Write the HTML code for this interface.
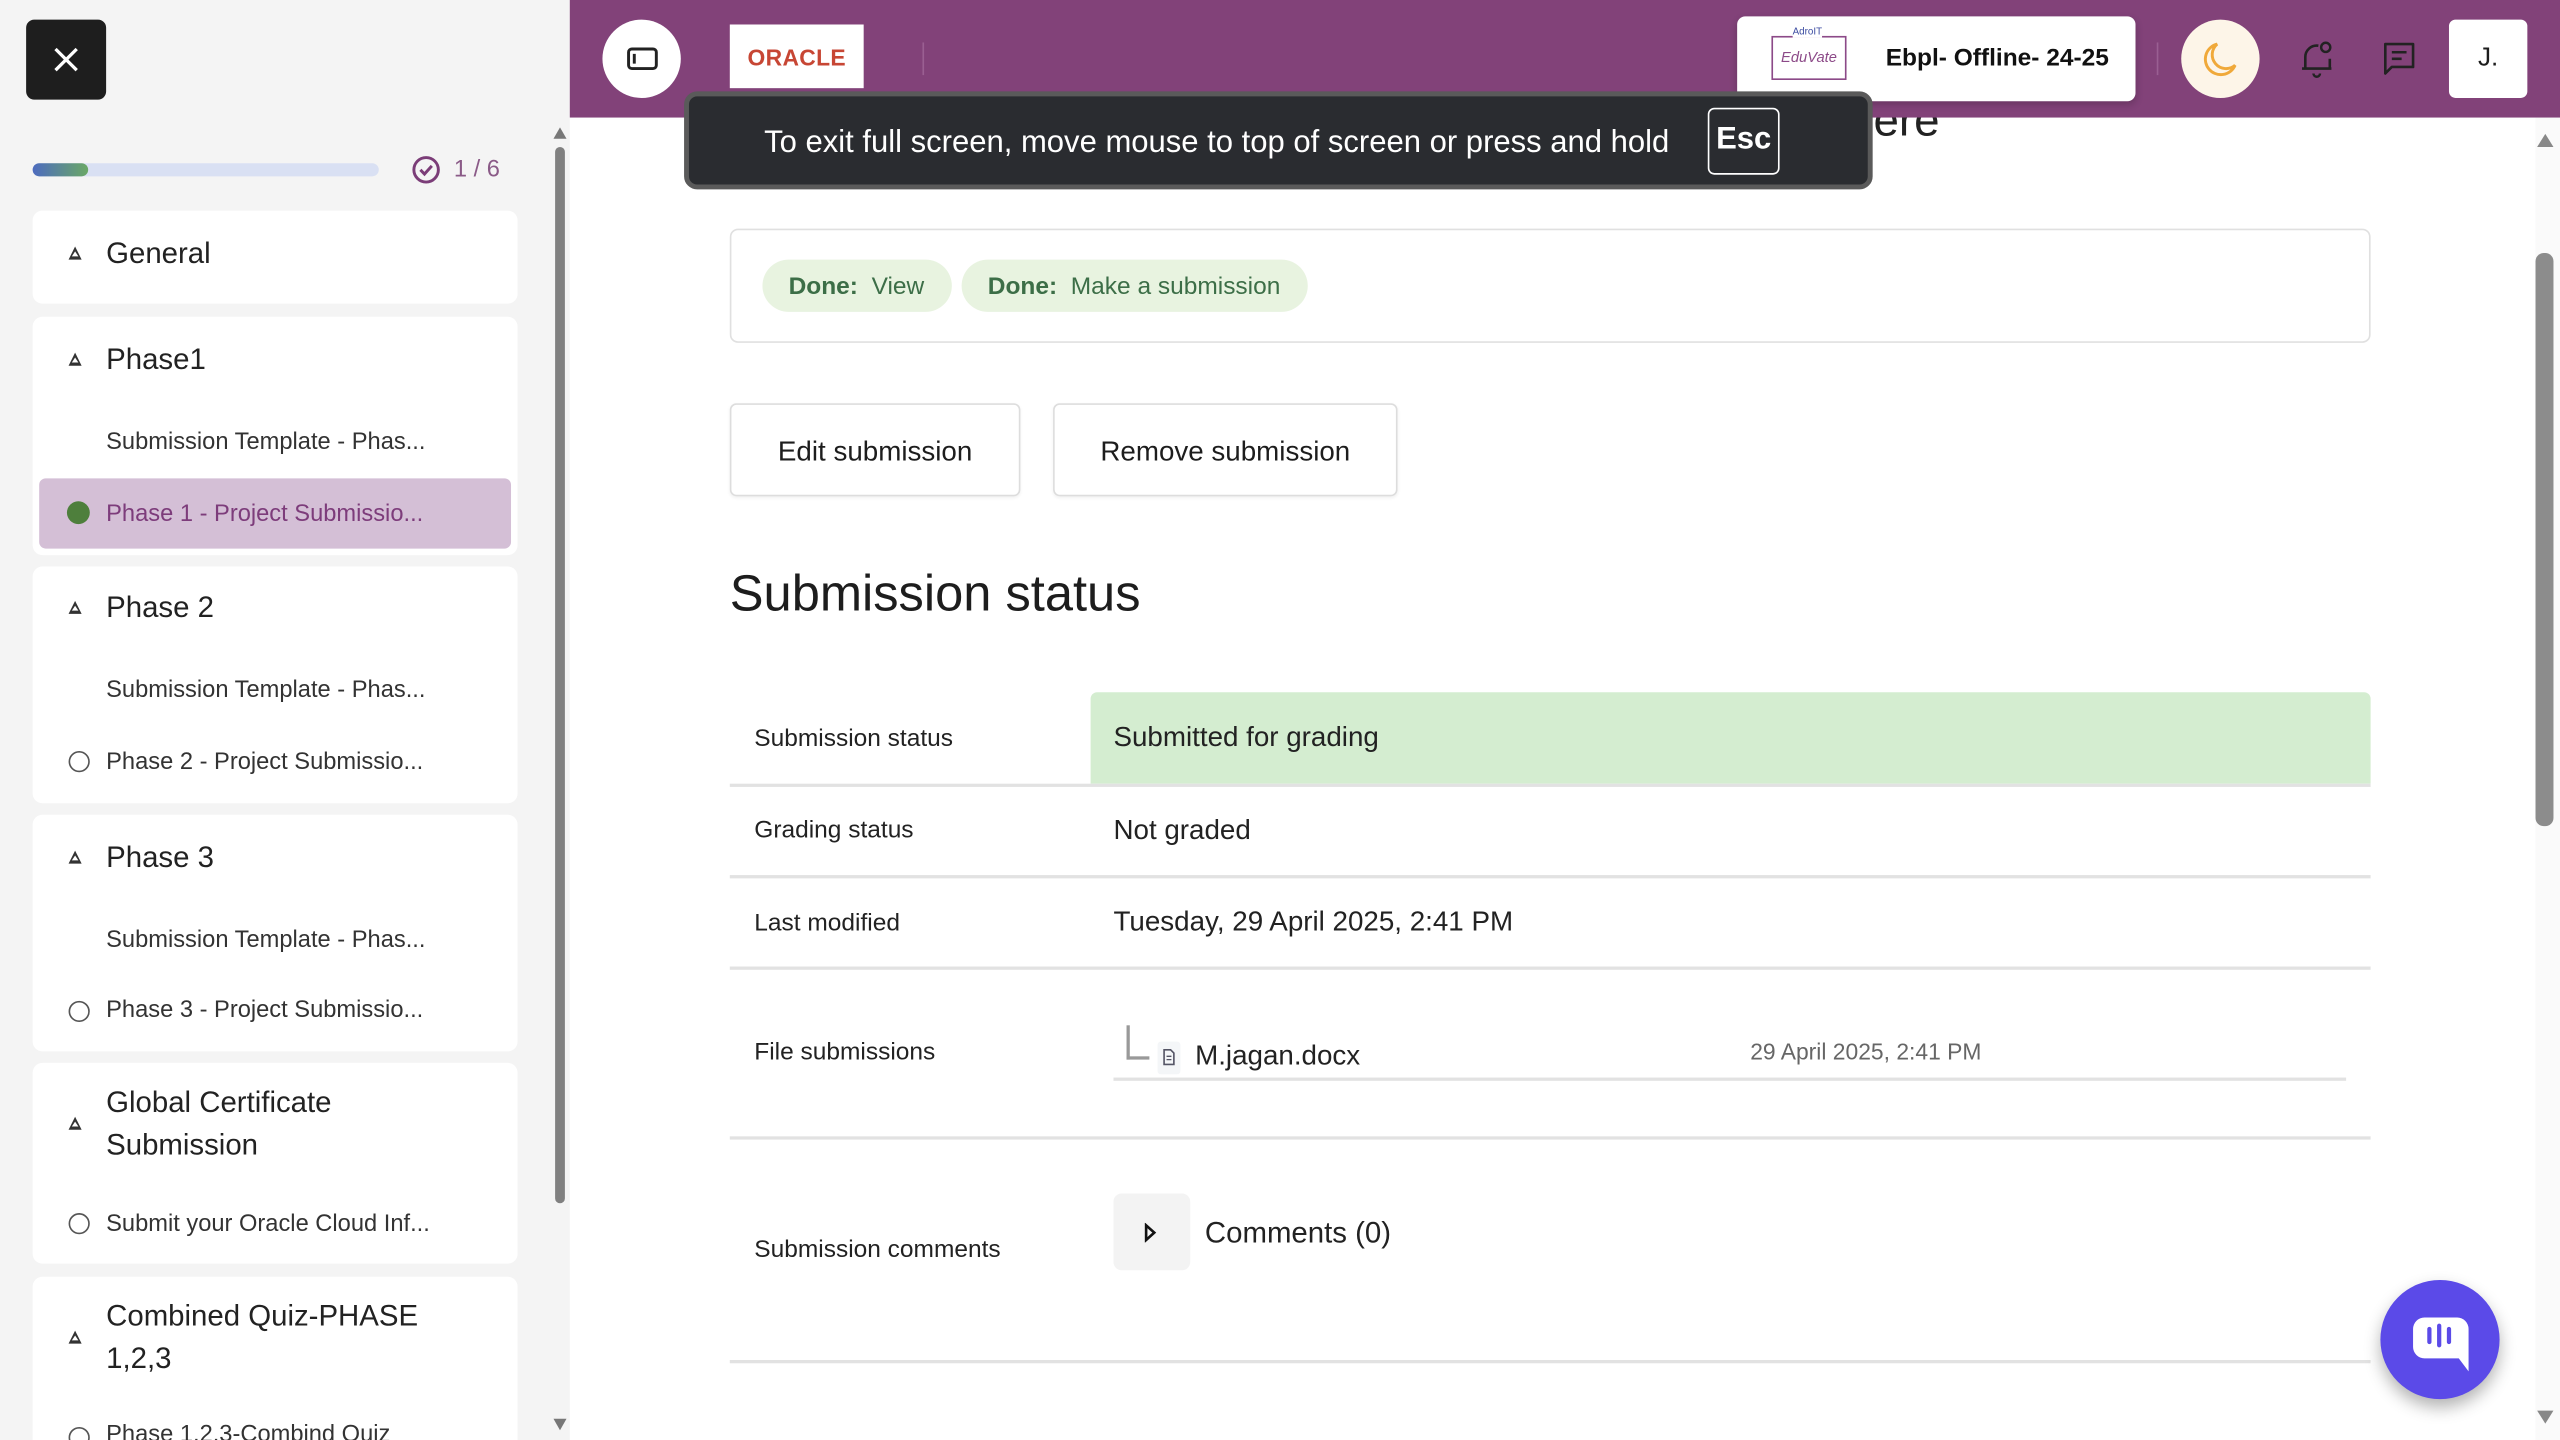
<!DOCTYPE html>
<html><head><meta charset="utf-8"><style>
*{box-sizing:border-box;margin:0;padding:0}
html,body{width:2560px;height:1440px;overflow:hidden;background:#fff}
#s{position:absolute;left:0;top:0;width:1568px;height:882px;transform:scale(1.632653);transform-origin:0 0;font-family:"Liberation Sans",sans-serif;color:#1d1d1d;overflow:hidden}
.a{position:absolute}
.side{left:0;top:0;width:349px;height:882px;background:#f4f4f4}
.card{position:absolute;left:20px;width:297px;background:#fff;border-radius:6px}
.h{position:absolute;left:45px;font-size:18px;color:#222;line-height:26px}
.tri{position:absolute;left:22px;width:0;height:0;border-left:4.5px solid transparent;border-right:4.5px solid transparent;border-bottom:8px solid #333}
.tri::after{content:"";position:absolute;left:-2px;top:3px;border-left:2px solid transparent;border-right:2px solid transparent;border-bottom:3.5px solid #fff}
.it{position:absolute;left:45px;font-size:14.5px;color:#333;white-space:nowrap}
.circ{position:absolute;left:22px;width:13px;height:13px;border:1.6px solid #555;border-radius:50%}
.top{left:349px;top:0;width:1219px;height:72px;background:#824279;z-index:2}
.td{position:absolute;font-size:15px;color:#222}
.line{position:absolute;left:447px;width:1005px;height:1.5px;background:#e2e2e2}
</style></head><body><div id="s">
<div class="a" style="left:700px;width:488px;top:58px;font-size:28px;color:#222;text-align:right;z-index:1">Upload here</div>
<div class="a side">
 <div class="a" style="left:16px;top:12px;width:49px;height:49px;background:#1e1e1e;border-radius:5px">
  <svg width="49" height="49"><path d="M18 18L31 31M31 18L18 31" stroke="#fff" stroke-width="2"/></svg></div>
 <div class="a" style="left:20px;top:100px;width:212px;height:8px;background:#d9e0f3;border-radius:4px"></div>
 <div class="a" style="left:20px;top:100px;width:34px;height:8px;background:linear-gradient(90deg,#4d6bbf,#6aa865);border-radius:4px"></div>
 <svg class="a" style="left:252px;top:95px" width="18" height="18"><circle cx="9" cy="9" r="7.5" fill="none" stroke="#7b3d78" stroke-width="1.8"/><path d="M5.5 9l2.5 2.6 4.5-5" fill="none" stroke="#7b3d78" stroke-width="1.8"/></svg>
 <div class="a" style="left:278px;top:96px;font-size:14.5px;color:#8a5a87">1 / 6</div>
 <div class="a" style="left:340px;top:90px;width:6px;height:647px;background:#808080;border-radius:3px"></div>
 <div class="a" style="left:339px;top:78px;border-left:4px solid transparent;border-right:4px solid transparent;border-bottom:7px solid #777"></div>
 <div class="a" style="left:339px;top:869px;border-left:4px solid transparent;border-right:4px solid transparent;border-top:7px solid #777"></div>

 <div class="card" style="top:129px;height:57px"><div class="tri" style="top:22px"></div><div class="h" style="top:13px">General</div></div>
 <div class="card" style="top:194px;height:146px"><div class="tri" style="top:22px"></div><div class="h" style="top:13px">Phase1</div>
  <div class="it" style="top:69px">Submission Template - Phas...</div>
  <div class="a" style="left:4px;top:99px;width:289px;height:43px;background:#d4bfd6;border-radius:4px"></div>
  <div class="a" style="left:21px;top:113px;width:14px;height:14px;background:#4e7f3c;border-radius:50%"></div>
  <div class="it" style="top:113px;color:#7d3c7b">Phase 1 - Project Submissio...</div></div>
 <div class="card" style="top:347px;height:145px"><div class="tri" style="top:21px"></div><div class="h" style="top:12px">Phase 2</div>
  <div class="it" style="top:68px">Submission Template - Phas...</div>
  <div class="circ" style="top:113px"></div><div class="it" style="top:112px">Phase 2 - Project Submissio...</div></div>
 <div class="card" style="top:499px;height:145px"><div class="tri" style="top:22px"></div><div class="h" style="top:13px">Phase 3</div>
  <div class="it" style="top:69px">Submission Template - Phas...</div>
  <div class="circ" style="top:114px"></div><div class="it" style="top:112px">Phase 3 - Project Submissio...</div></div>
 <div class="card" style="top:651px;height:123px"><div class="tri" style="top:33px"></div><div class="h" style="top:11px">Global Certificate<br>Submission</div>
  <div class="circ" style="top:92px"></div><div class="it" style="top:91px">Submit your Oracle Cloud Inf...</div></div>
 <div class="card" style="top:782px;height:120px"><div class="tri" style="top:33px"></div><div class="h" style="top:11px">Combined Quiz-PHASE<br>1,2,3</div>
  <div class="circ" style="top:92px"></div><div class="it" style="top:89px">Phase 1,2,3-Combind Quiz</div></div>
</div>

<div class="a top">
 <div class="a" style="left:20px;top:12px;width:48px;height:48px;background:#fff;border-radius:50%">
  <svg width="48" height="48"><rect x="16" y="18" width="17" height="12" rx="2" fill="none" stroke="#222" stroke-width="1.8"/><path d="M19.5 21v6" stroke="#222" stroke-width="1.8"/></svg></div>
 <div class="a" style="left:98px;top:15px;width:82px;height:39px;background:#fff;text-align:center;line-height:41px;font-size:14px;font-weight:bold;color:#c74634;letter-spacing:.2px">ORACLE</div>
 <div class="a" style="left:216px;top:26px;width:1px;height:20px;background:#9a5f92"></div>
 <div class="a" style="left:715px;top:10px;width:244px;height:52px;background:#fff;border-radius:5px;box-shadow:0 2px 5px rgba(0,0,0,.2)">
  <div class="a" style="left:21px;top:12px;width:46px;height:27px;border:1px solid #8c4a88;font-size:9px;font-style:italic;color:#8c4a88;text-align:center;line-height:25px">EduVate</div>
  <div class="a" style="left:34px;top:7px;font-size:6px;background:#fff;color:#3a4aa0">AdroIT</div>
  <div class="a" style="left:91px;top:17px;font-size:15px;font-weight:bold;color:#111">Ebpl- Offline- 24-25</div></div>
 <div class="a" style="left:972px;top:26px;width:1px;height:20px;background:#9a5f92"></div>
 <div class="a" style="left:987px;top:12px;width:48px;height:48px;background:#fdf5e8;border-radius:50%">
  <svg width="48" height="48"><path d="M22 15a9.5 9.5 0 1 0 11 13a8 8 0 0 1-11-13z" fill="none" stroke="#f0a93a" stroke-width="1.8"/></svg></div>
 <svg class="a" style="left:1057px;top:22px" width="26" height="28"><path d="M6 20V13a7 7 0 0 1 8-7M4 20h18M21 20v-6" fill="none" stroke="#222" stroke-width="1.6"/><circle cx="18.5" cy="7" r="2.8" fill="none" stroke="#222" stroke-width="1.5"/><path d="M11 23a2 2 0 0 0 4 0" stroke="#222" stroke-width="1.5" fill="none"/></svg>
 <svg class="a" style="left:1108px;top:23px" width="26" height="28"><path d="M4 4h17v14H8l-4 4z" fill="none" stroke="#222" stroke-width="1.6" stroke-linejoin="round"/><path d="M8 9h9M8 13h6" stroke="#222" stroke-width="1.6"/></svg>
 <div class="a" style="left:1151px;top:12px;width:48px;height:48px;background:#fff;border-radius:4px;text-align:center;line-height:48px;font-size:16px">J.</div>
</div>

<div class="a" style="left:1553px;top:72px;width:15px;height:810px;background:#fafafa"></div>
<div class="a" style="left:1554px;top:82px;border-left:5px solid transparent;border-right:5px solid transparent;border-bottom:8px solid #888"></div>
<div class="a" style="left:1554px;top:864px;border-left:5px solid transparent;border-right:5px solid transparent;border-top:8px solid #888"></div>
<div class="a" style="left:1553px;top:155px;width:11px;height:351px;background:#8c8c8c;border-radius:5px"></div>

<div class="a" style="left:419px;top:56px;width:728px;height:60px;background:#2a2c30;border:3px solid #5a5a5a;border-radius:8px;z-index:3">
 <div class="a" style="left:46px;top:18px;font-size:19px;color:#fff;white-space:nowrap">To exit full screen, move mouse to top of screen or press and hold</div>
 <div class="a" style="left:624px;top:7px;width:44px;height:41px;border:1.5px solid #fff;border-radius:4px;color:#fff;font-weight:bold;font-size:19px;text-align:center;line-height:38px">Esc</div>
</div>

<div class="a" style="left:447px;top:140px;width:1005px;height:70px;border:1.5px solid #e0e0e0;border-radius:5px"></div>
<div class="a" style="left:467px;top:159px;width:116px;height:32px;background:#e8f3e0;border-radius:16px;font-size:15px;line-height:33px;padding-left:16px;color:#3c6e47"><b>Done:</b>&nbsp; View</div>
<div class="a" style="left:589px;top:159px;width:212px;height:32px;background:#e8f3e0;border-radius:16px;font-size:15px;line-height:33px;padding-left:16px;color:#3c6e47"><b>Done:</b>&nbsp; Make a submission</div>

<div class="a" style="left:447px;top:247px;width:178px;height:57px;border:1.5px solid #ddd;border-radius:4px;font-size:17px;text-align:center;line-height:57px;box-shadow:0 1px 2px rgba(0,0,0,.06)">Edit submission</div>
<div class="a" style="left:645px;top:247px;width:211px;height:57px;border:1.5px solid #ddd;border-radius:4px;font-size:17px;text-align:center;line-height:57px;box-shadow:0 1px 2px rgba(0,0,0,.06)">Remove submission</div>

<div class="a" style="left:447px;top:346px;font-size:31px;color:#1d1d1d">Submission status</div>

<div class="a" style="left:668px;top:424px;width:784px;height:56px;background:#d4edd0;border-radius:4px 4px 0 0"></div>
<div class="td" style="left:462px;top:444px">Submission status</div>
<div class="td" style="left:682px;top:442px;font-size:17px">Submitted for grading</div>
<div class="line" style="top:480px"></div>
<div class="td" style="left:462px;top:500px">Grading status</div>
<div class="td" style="left:682px;top:499px;font-size:17px">Not graded</div>
<div class="line" style="top:536px"></div>
<div class="td" style="left:462px;top:557px">Last modified</div>
<div class="td" style="left:682px;top:555px;font-size:17px">Tuesday, 29 April 2025, 2:41 PM</div>
<div class="line" style="top:592px"></div>
<div class="td" style="left:462px;top:636px">File submissions</div>
<div class="a" style="left:690px;top:628px;width:14px;height:21px;border-left:2px solid #999;border-bottom:2px solid #999"></div>
<div class="a" style="left:709px;top:638px;width:14px;height:20px;background:#f4f6f8;border-radius:2px"></div>
<svg class="a" style="left:712px;top:642px" width="8" height="11"><path d="M1 1h4l2 2v7H1z" fill="none" stroke="#556" stroke-width="1"/><path d="M2.5 5h3M2.5 7h3" stroke="#556" stroke-width=".8"/></svg>
<div class="td" style="left:732px;top:637px;font-size:17px">M.jagan.docx</div>
<div class="td" style="left:1072px;top:636px;font-size:14px;color:#666">29 April 2025, 2:41 PM</div>
<div class="a" style="left:682px;top:660px;width:755px;height:1.5px;background:#e2e2e2"></div>
<div class="line" style="top:696px"></div>
<div class="td" style="left:462px;top:757px">Submission comments</div>
<div class="a" style="left:682px;top:731px;width:47px;height:47px;background:#f3f3f3;border-radius:5px"></div>
<svg class="a" style="left:700px;top:749px" width="10" height="12"><path d="M2 1.5l5 4.5-5 4.5z" fill="none" stroke="#111" stroke-width="1.6"/></svg>
<div class="td" style="left:738px;top:745px;font-size:18px">Comments (0)</div>
<div class="line" style="top:833px"></div>

<div class="a" style="left:1458px;top:784px;width:73px;height:73px;background:#5b4ae8;border-radius:50%;box-shadow:0 5px 10px rgba(0,0,0,.3)">
 <svg width="73" height="73"><path d="M20 30a7 7 0 0 1 7-7h20a7 7 0 0 1 7 7v26l-6-8H27a7 7 0 0 1-7-7z" fill="#fff"/><path d="M30 30v8M36 28v12M42 30v8" stroke="#5b4ae8" stroke-width="2.6" stroke-linecap="round"/></svg></div>
</div></body></html>
